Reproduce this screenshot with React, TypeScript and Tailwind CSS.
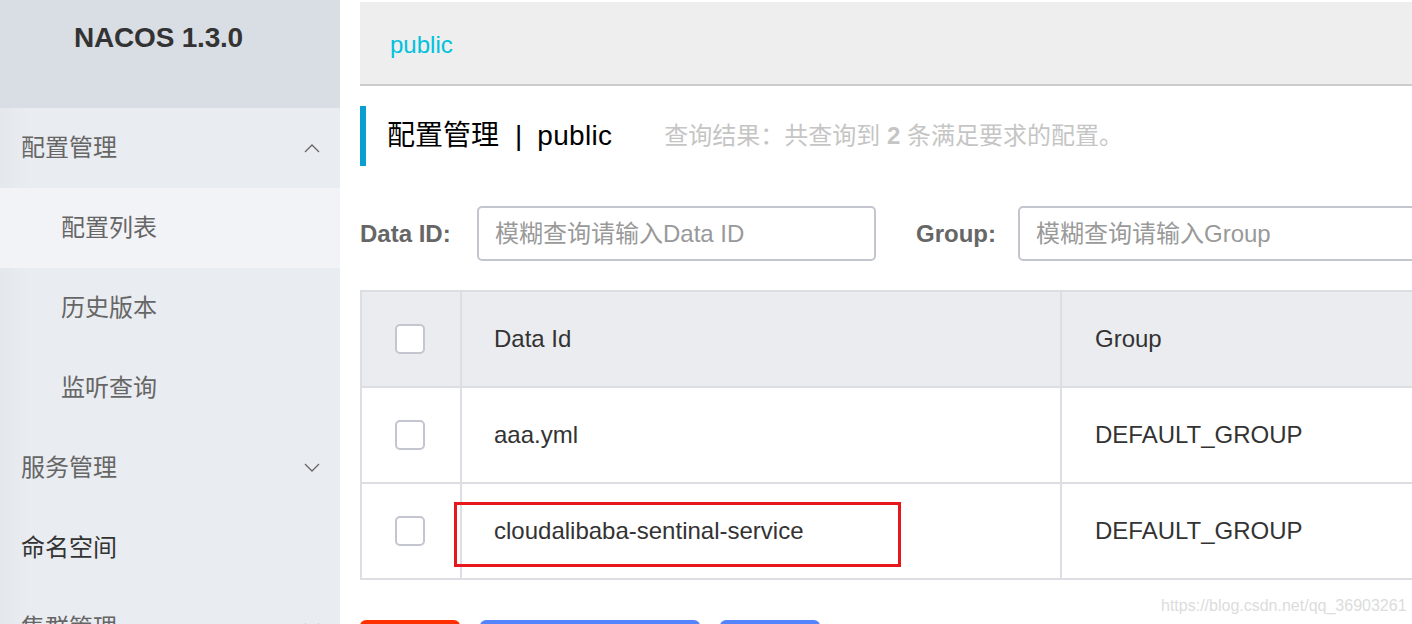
import React from "react";

const font = { fontFamily: '"Liberation Sans", "Noto Sans CJK SC", sans-serif' };

function Chevron({ up }: { up?: boolean }) {
  return (
    <svg width="16" height="10" viewBox="0 0 16 10" className="shrink-0">
      <polyline
        points={up ? "1,9 8,2 15,9" : "1,1 8,8 15,1"}
        fill="none"
        stroke="#666"
        strokeWidth="1.3"
      />
    </svg>
  );
}

function Checkbox() {
  return <div className="w-[30px] h-[30px] rounded-[5px] border-2 border-[#c4c6cf] bg-white" />;
}

export default function App() {
  return (
    <div className="flex w-[1412px] h-[624px] overflow-hidden bg-white relative" style={font}>
      {/* Sidebar */}
      <aside className="w-[340px] shrink-0 flex flex-col bg-[linear-gradient(90deg,#e4e7ec_0px,#e9ecf1_30px)]">
        <div className="h-[108px] shrink-0 bg-[#d9dde4] flex pl-[74px] pt-[22px]">
          <span className="text-[28px] leading-[32px] font-bold text-[#333] tracking-[-0.2px]">NACOS 1.3.0</span>
        </div>
        <div className="h-[80px] shrink-0 flex items-center justify-between pl-[21px] pr-[20px] text-[24px] text-[#666]">
          <span>配置管理</span>
          <Chevron up />
        </div>
        <div className="h-[80px] shrink-0 flex items-center pl-[61px] text-[24px] text-[#666] bg-[#f2f3f7]">配置列表</div>
        <div className="h-[80px] shrink-0 flex items-center pl-[61px] text-[24px] text-[#666]">历史版本</div>
        <div className="h-[80px] shrink-0 flex items-center pl-[61px] text-[24px] text-[#666]">监听查询</div>
        <div className="h-[80px] shrink-0 flex items-center justify-between pl-[21px] pr-[20px] text-[24px] text-[#666]">
          <span>服务管理</span>
          <Chevron />
        </div>
        <div className="h-[80px] shrink-0 flex items-center pl-[21px] text-[24px] text-[#333]">命名空间</div>
        <div className="h-[80px] shrink-0 flex items-center justify-between pl-[21px] pr-[20px] text-[24px] text-[#666]">
          <span>集群管理</span>
          <Chevron />
        </div>
      </aside>

      {/* Main */}
      <main className="flex-1 min-w-0 pl-[20px] flex flex-col overflow-hidden">
        <div className="mt-[2px] h-[84px] shrink-0 bg-[#eeeeee] border-b-2 border-[#cccccc] flex items-center pl-[30px]">
          <span className="text-[24px] text-[#00c1de] mt-[4px]">public</span>
        </div>

        <div className="mt-[20px] h-[60px] shrink-0 flex items-center border-l-[6px] border-[#0a9fd0]">
          <span className="ml-[21px] text-[28px] text-[#000]">配置管理</span>
          <span className="ml-[16px] text-[28px] text-[#000]">|</span>
          <span className="ml-[15px] text-[28px] text-[#000] tracking-[0.3px]">public</span>
          <span className="ml-[52px] text-[24px] text-[#c5c5c5]">
            查询结果：共查询到 <b className="font-bold">2</b> 条满足要求的配置。
          </span>
        </div>

        <div className="mt-[40px] h-[55px] shrink-0 flex items-center">
          <span className="w-[117px] shrink-0 text-[24px] font-bold text-[#666]">Data ID:</span>
          <div className="w-[399px] h-[55px] shrink-0 border-2 border-[#c4c6cf] rounded-[5px] flex items-center pl-[16px] text-[24px] text-[#999]">
            模糊查询请输入Data ID
          </div>
          <span className="ml-[40px] w-[102px] shrink-0 text-[24px] font-bold text-[#666]">Group:</span>
          <div className="w-[420px] h-[55px] shrink-0 border-2 border-[#c4c6cf] rounded-[5px] flex items-center pl-[16px] text-[24px] text-[#999]">
            模糊查询请输入Group
          </div>
        </div>

        <div className="mt-[29px] shrink-0 border-t-2 border-l-2 border-[#dcdee3] w-[1100px]">
          <div className="grid grid-cols-[100px_600px_1fr] h-[96px] border-b-2 border-[#dcdee3] bg-[#ebecf0] text-[24px] text-[#333]">
            <div className="border-r-2 border-[#dcdee3] flex items-center pl-[33px]"><Checkbox /></div>
            <div className="border-r-2 border-[#dcdee3] flex items-center pl-[32px]">Data Id</div>
            <div className="flex items-center pl-[33px]">Group</div>
          </div>
          <div className="grid grid-cols-[100px_600px_1fr] h-[96px] border-b-2 border-[#dcdee3] text-[24px] text-[#333]">
            <div className="border-r-2 border-[#dcdee3] flex items-center pl-[33px]"><Checkbox /></div>
            <div className="border-r-2 border-[#dcdee3] flex items-center pl-[32px]">aaa.yml</div>
            <div className="flex items-center pl-[33px]">DEFAULT_GROUP</div>
          </div>
          <div className="grid grid-cols-[100px_600px_1fr] h-[96px] border-b-2 border-[#dcdee3] text-[24px] text-[#333]">
            <div className="border-r-2 border-[#dcdee3] flex items-center pl-[33px]"><Checkbox /></div>
            <div className="border-r-2 border-[#dcdee3] flex items-center pl-[32px] relative">
              <span>cloudalibaba-sentinal-service</span>
              <div className="absolute left-[-8px] top-[18px] w-[447px] h-[65px] border-[3px] border-[#e8171c]" />
            </div>
            <div className="flex items-center pl-[33px]">DEFAULT_GROUP</div>
          </div>
        </div>

        <div className="mt-[40px] flex gap-[20px] shrink-0">
          <div className="w-[100px] h-[30px] rounded-[6px] bg-[#ff3000]" />
          <div className="w-[220px] h-[30px] rounded-[6px] bg-[#5584ff]" />
          <div className="w-[100px] h-[30px] rounded-[6px] bg-[#5584ff]" />
        </div>
      </main>

      <span className="absolute left-[1161px] top-[596px] text-[16px] leading-[20px] text-[#dcdcdc]">
        https://blog.csdn.net/qq_36903261
      </span>
    </div>
  );
}
